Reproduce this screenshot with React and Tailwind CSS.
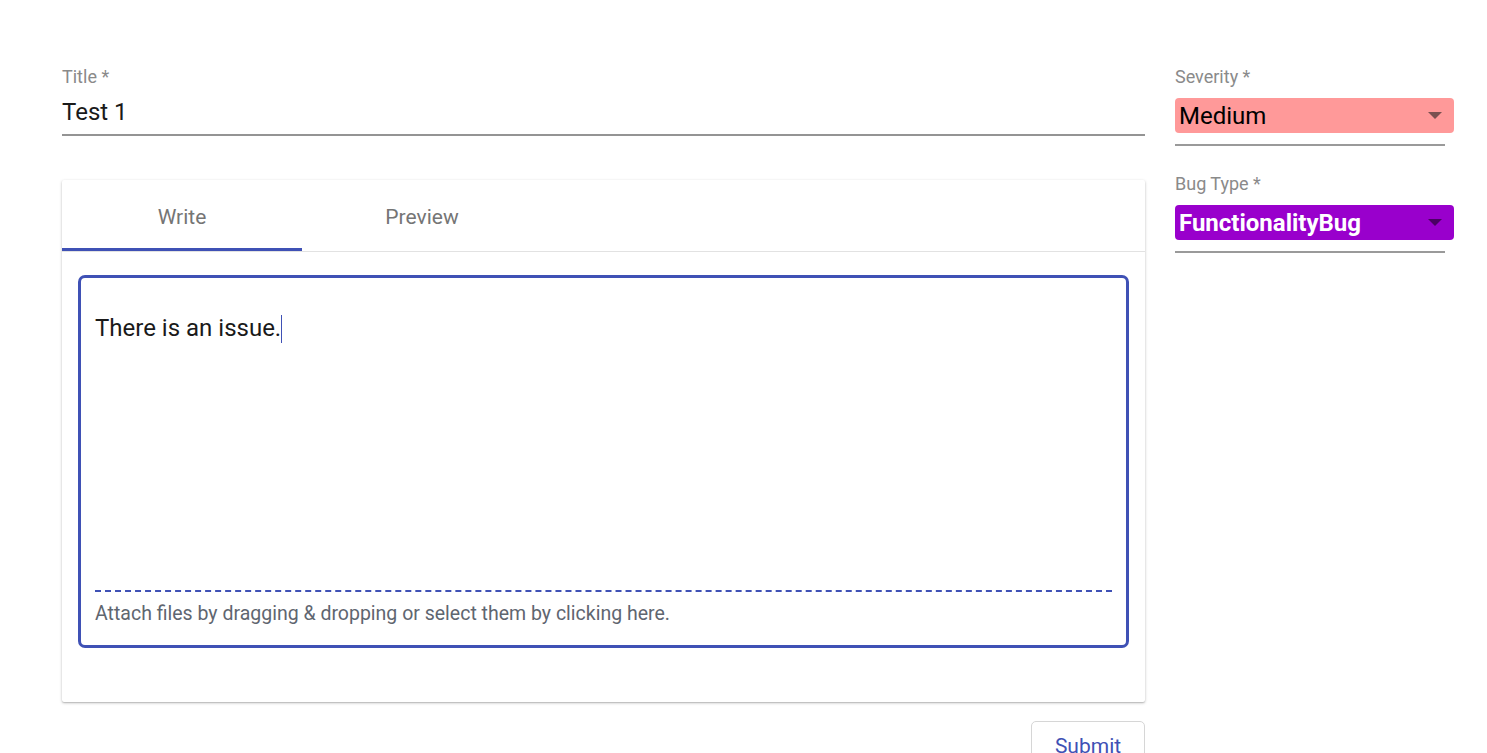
import React from "react";

const Caret = ({ color }) => (
  <svg width="14" height="8" viewBox="0 0 14 8" className="shrink-0">
    <path d="M0 0 L14 0 L7 7 Z" fill={color} />
  </svg>
);

const SelectField = ({ label, value, bg, textClass, caret }) => (
  <div className="flex flex-col">
    <span className="text-[18px] leading-[22px] text-[#8a8a8a]">{label}</span>
    <div className="mt-[10px] w-[279px]">
      <div
        className={`h-[35px] rounded-[4px] flex items-center justify-between pl-[4px] pr-[12px] ${bg}`}
      >
        <span className={`text-[24px] leading-none ${textClass}`}>{value}</span>
        <Caret color={caret} />
      </div>
      <div className="mt-[11px] w-[270px] h-[2px] bg-[#9a9a9a]" />
    </div>
  </div>
);

export default function App() {
  return (
    <div
      className="w-[1487px] h-[753px] overflow-hidden bg-white"
      style={{ fontFamily: "Roboto, 'Liberation Sans', sans-serif" }}
    >
      <div className="flex pt-[66px] pl-[62px]">
        {/* left column */}
        <div className="w-[1083px] flex flex-col">
          <span className="text-[18px] leading-[22px] text-[#8a8a8a]">Title *</span>
          <div className="mt-[10px] text-[24px] leading-[28px] text-[#1a1a1a]">Test 1</div>
          <div className="mt-[8px] h-[2px] bg-[#949494]" />

          <div className="mt-[44px] h-[522px] bg-white rounded-[2px] shadow-[0_1px_3px_rgba(0,0,0,0.25),0_1px_1px_rgba(0,0,0,0.1)] flex flex-col">
            <div className="flex h-[72px] border-b border-[#e2e2e2]">
              <div className="w-[240px] flex flex-col">
                <div className="flex-1 flex items-center justify-center pt-[7px] text-[21px] text-[#757575]">
                  Write
                </div>
                <div className="h-[3px] bg-[#3f51b5]" />
              </div>
              <div className="w-[240px] flex items-center justify-center pt-[4px] text-[21px] text-[#757575]">
                Preview
              </div>
            </div>

            <div className="px-[16px] pt-[23px]">
              <div className="h-[373px] border-[3px] border-[#3f51b5] rounded-[7px] flex flex-col px-[14px]">
                <div className="flex-1 pt-[38px]">
                  <span className="text-[24px] leading-none text-[#1a1a1a]">There is an issue.</span>
                  <span className="inline-block align-middle w-px h-[28px] bg-[#3f51b5] -mt-[6px]" />
                </div>
                <div className="border-t-2 border-dashed border-[#3f51b5]" />
                <div className="h-[53px] pt-[7px] text-[19.5px] text-[#5f6670]">
                  Attach files by dragging &amp; dropping or select them by clicking here.
                </div>
              </div>
            </div>
          </div>

          <div className="flex justify-end mt-[19px]">
            <button className="w-[114px] h-[54px] border border-[#d6d6d6] rounded-[5px] bg-white text-[21px] text-[#3f51b5] pb-[2px]">
              Submit
            </button>
          </div>
        </div>

        {/* right column */}
        <div className="ml-[30px] flex flex-col gap-[27px]">
          <SelectField
            label="Severity *"
            value="Medium"
            bg="bg-[#ff9999]"
            textClass="text-black"
            caret="#7a5050"
          />
          <SelectField
            label="Bug Type *"
            value="FunctionalityBug"
            bg="bg-[#9900cc]"
            textClass="text-white font-bold"
            caret="#4a0063"
          />
        </div>
      </div>
    </div>
  );
}
